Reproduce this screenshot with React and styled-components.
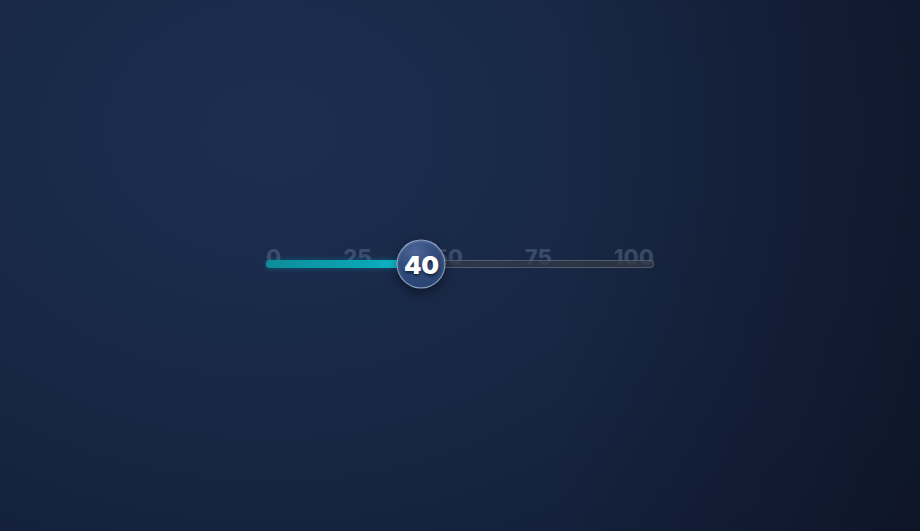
import React from "react";
import styled, { createGlobalStyle } from "styled-components";

const GlobalStyle = createGlobalStyle`
  html, body {
    margin: 0;
    padding: 0;
    height: 100%;
  }
  body {
    font-family: Inter, "Liberation Sans", sans-serif;
    background: #141f38;
  }
  #root {
    height: 100%;
  }
`;

const Page = styled.div`
  height: 100vh;
  display: flex;
  align-items: center;
  justify-content: center;
  background:
    linear-gradient(90deg, rgba(8, 10, 20, 0) 60%, rgba(8, 10, 20, 0.3) 100%),
    radial-gradient(ellipse 900px 700px at 270px 130px, #1c2e50 0%, #172643 45%, #121d36 80%, #0e1526 110%);
`;

const Slider = styled.div`
  position: relative;
  width: 388px;
  margin-top: -17px;
`;

const Scale = styled.div`
  display: flex;
  justify-content: space-between;
  font-size: 22px;
  font-weight: 800;
  line-height: 22px;
  color: rgba(160, 180, 215, 0.25);
  margin-bottom: -8px;
  user-select: none;
`;

const Track = styled.div`
  position: relative;
  height: 8px;
  box-sizing: border-box;
  border-radius: 4px;
  background: rgba(52, 57, 70, 0.75);
  border: 1px solid rgba(140, 150, 172, 0.4);
`;

const Fill = styled.div`
  position: absolute;
  left: -1px;
  top: -1px;
  bottom: -1px;
  border-radius: 4px;
  background: linear-gradient(90deg, #0d8c99 0%, #0aa8b8 70%, #14cada 100%);
  box-shadow: 0 0 6px rgba(20, 200, 220, 0.3);
`;

const Thumb = styled.div`
  position: absolute;
  top: 50%;
  width: 49px;
  height: 49px;
  transform: translate(-50%, -50%);
  border-radius: 50%;
  box-sizing: border-box;
  border: 1px solid rgba(205, 220, 245, 0.6);
  background: radial-gradient(circle at 38% 25%, #4a6596 0%, #324d7e 40%, #243e6c 100%);
  box-shadow: 0 4px 12px rgba(0, 0, 0, 0.45), inset 0 1px 3px rgba(255, 255, 255, 0.2);
  display: flex;
  align-items: center;
  justify-content: center;
  color: #ffffff;
  font-size: 25px;
  font-weight: 900;
  letter-spacing: -0.3px;
  text-shadow: 0 2px 3px rgba(0, 0, 0, 0.55);
`;

const ticks = [0, 25, 50, 75, 100];

export default function App() {
  const value = 40;
  return (
    <>
      <GlobalStyle />
      <Page>
        <Slider>
          <Scale>
            {ticks.map((t) => (
              <span key={t}>{t}</span>
            ))}
          </Scale>
          <Track>
            <Fill style={{ width: `${value}%` }} />
            <Thumb style={{ left: `${value}%` }}>{value}</Thumb>
          </Track>
        </Slider>
      </Page>
    </>
  );
}
